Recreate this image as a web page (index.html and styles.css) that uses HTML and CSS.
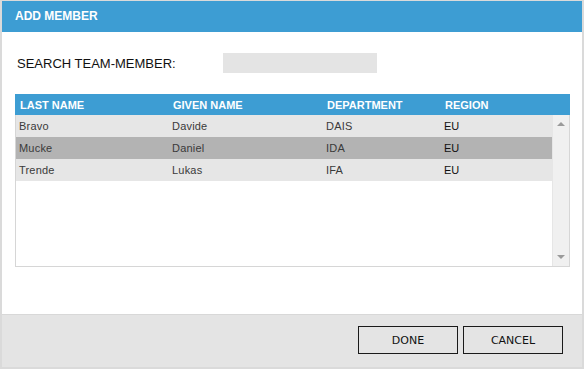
FILE: index.html
```html
<!DOCTYPE html>
<html lang="en">
<head>
    <meta charset="UTF-8">
    <title>Add Member</title>
    <link rel="stylesheet" href="styles.css">
</head>
<body>

<div class="dialog">
    <div class="dialog-title">ADD MEMBER</div>

    <div class="dialog-body">
        <div class="search-row">
            <label class="search-label" for="search">SEARCH TEAM-MEMBER:</label>
            <input type="text" id="search" class="search-input">
        </div>

        <!-- member list -->
        <div class="member-list">
            <div class="list-head">
                <div class="cell">LAST NAME</div>
                <div class="cell">GIVEN NAME</div>
                <div class="cell">DEPARTMENT</div>
                <div class="cell">REGION</div>
            </div>
            <div class="list-body">
                <div class="rows">
                    <div class="row">
                        <div class="cell masked">Bravo</div>
                        <div class="cell masked">Davide</div>
                        <div class="cell masked">DAIS</div>
                        <div class="cell">EU</div>
                    </div>
                    <div class="row selected">
                        <div class="cell masked">Mucke</div>
                        <div class="cell masked">Daniel</div>
                        <div class="cell masked">IDA</div>
                        <div class="cell">EU</div>
                    </div>
                    <div class="row">
                        <div class="cell masked">Trende</div>
                        <div class="cell masked">Lukas</div>
                        <div class="cell masked">IFA</div>
                        <div class="cell">EU</div>
                    </div>
                </div>
                <div class="scrollbar">
                    <span class="arrow up"></span>
                    <span class="arrow down"></span>
                </div>
            </div>
        </div>
    </div>

    <div class="dialog-footer">
        <button class="btn">DONE</button>
        <button class="btn">CANCEL</button>
    </div>
</div>

</body>
</html>
```

FILE: styles.css
```css
* {
    box-sizing: border-box;
    margin: 0;
    padding: 0;
}

body {
    background-color: #dadada;
    font-family: 'Liberation Sans', Arial, sans-serif;
    color: #111;
    padding: 1px 2px 2px 2px;
    height: 369px;
}

.dialog {
    width: 580px;
    height: 366px;
    background-color: #fff;
    display: flex;
    flex-direction: column;
}

.dialog-title {
    height: 31px;
    line-height: 31px;
    padding-left: 13px;
    background-color: #3d9dd3;
    color: #fff;
    font-size: 12px;
    font-weight: bold;
}

.dialog-body {
    flex: 1;
    padding: 21px 11px 0 13px;
}

.search-row {
    display: flex;
    align-items: center;
    height: 20px;
    margin-bottom: 21px;
}

.search-label {
    width: 208px;
    padding-left: 2px;
    font-size: 13px;
    color: #111;
}

.search-input {
    width: 154px;
    height: 20px;
    border: none;
    background-color: #e4e4e4;
    outline: none;
}

.member-list {
    width: 555px;
    height: 173px;
    border: 1px solid #d6d6d6;
    border-top: none;
    display: flex;
    flex-direction: column;
}

.list-head,
.row {
    display: grid;
    grid-template-columns: 153px 154px 118px 1fr;
}

.list-head {
    height: 21px;
    margin: 0 -1px;
    padding-left: 1px;
    background-color: #3d9dd3;
    color: #fff;
    font-size: 11px;
    font-weight: bold;
    align-items: center;
}

.list-head .cell {
    padding-left: 4px;
}

.list-body {
    flex: 1;
    display: flex;
}

.rows {
    width: 536px;
}

.row {
    height: 22px;
    align-items: center;
    background-color: #e6e6e6;
    font-size: 11px;
}

.row .cell {
    padding-left: 3px;
}

.row.selected {
    background-color: #b3b3b3;
}

.masked {
    color: #3a3a3a;
    letter-spacing: 0.2px;
}

.scrollbar {
    width: 17px;
    background-color: #f0f0f0;
    border-left: 1px solid #e6e6e6;
    display: flex;
    flex-direction: column;
    justify-content: space-between;
    align-items: center;
    padding: 7px 0 7px;
}

.arrow {
    width: 0;
    height: 0;
    border-left: 4px solid transparent;
    border-right: 4px solid transparent;
}

.arrow.up {
    border-bottom: 4px solid #9a9a9a;
}

.arrow.down {
    border-top: 4px solid #9a9a9a;
}

.dialog-footer {
    height: 53px;
    background-color: #e4e4e4;
    border-top: 1px solid #d8d8d8;
    display: flex;
    justify-content: flex-end;
    gap: 5px;
    padding: 11px 19px 0 0;
}

.btn {
    width: 100px;
    height: 28px;
    background-color: #e4e4e4;
    border: 1px solid #1a1a1a;
    font-family: 'DejaVu Sans', sans-serif;
    font-size: 11px;
    color: #111;
    cursor: pointer;
}
```
